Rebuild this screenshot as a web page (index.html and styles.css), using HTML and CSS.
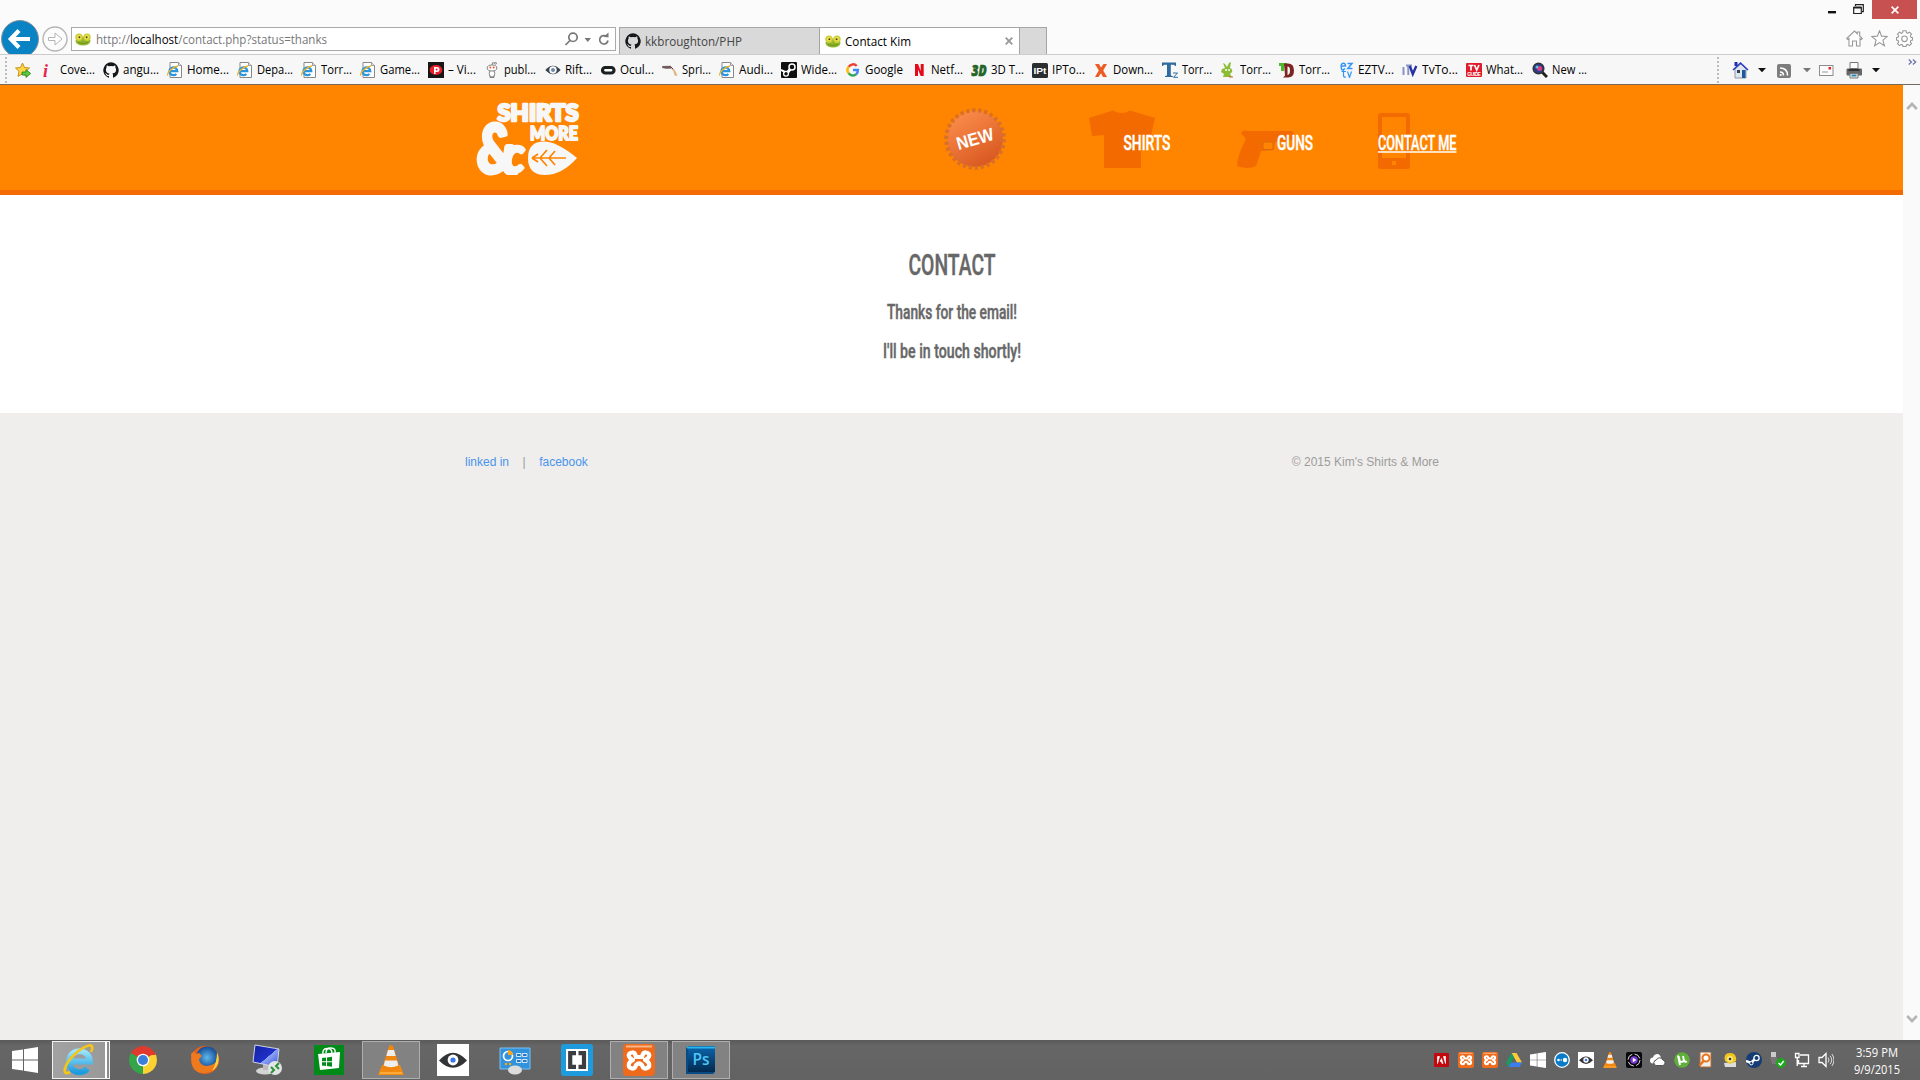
FILE: index.html
```html
<!DOCTYPE html>
<html lang="en">
<head>
<meta charset="utf-8">
<title>Contact Kim</title>
<link rel="stylesheet" href="styles.css">
</head>
<body>
<svg class="sprite" aria-hidden="true">
  <defs>
    <linearGradient id="g-badge" x1="0" y1="0" x2="0.6" y2="1"><stop offset="0" stop-color="#ff9350"/><stop offset="1" stop-color="#d95a22"/></linearGradient>
    <linearGradient id="g-blue" x1="0" y1="0" x2="0" y2="1"><stop offset="0" stop-color="#9be4fb"/><stop offset="1" stop-color="#1e9bdc"/></linearGradient>
    <linearGradient id="g-screen" x1="0" y1="0" x2="1" y2="1"><stop offset="0" stop-color="#1122a0"/><stop offset=".55" stop-color="#2030c8"/><stop offset=".56" stop-color="#8fa5f5"/><stop offset="1" stop-color="#3048d8"/></linearGradient>
    <linearGradient id="g-ps" x1="0" y1="0" x2="0" y2="1"><stop offset="0" stop-color="#0b62a8"/><stop offset="1" stop-color="#03294f"/></linearGradient>
    <radialGradient id="g-fox"><stop offset="0" stop-color="#5fb8ee"/><stop offset="1" stop-color="#134b94"/></radialGradient>
  </defs>
</svg>
<svg class="symbols" aria-hidden="true">
  <symbol id="frog" viewBox="0 0 16 16"><ellipse cx="8" cy="10" rx="7.500" ry="4.600" fill="#93b52c"/><circle cx="4" cy="6.300" r="3.700" fill="#c9cf3a"/><circle cx="12" cy="6.300" r="3.700" fill="#c9cf3a"/><circle cx="4.200" cy="6.200" r="2.200" fill="#f2e64e"/><circle cx="11.800" cy="6.200" r="2.200" fill="#f2e64e"/><circle cx="4.400" cy="6.200" r="1" fill="#5a3a10"/><circle cx="11.600" cy="6.200" r="1" fill="#5a3a10"/><path d="M3 11.500q5 2 10 0" stroke="#6d9020" fill="none"/></symbol>
  <symbol id="github" viewBox="0 0 16 16"><path fill="#15181b" d="M8 .2a8 8 0 0 0-2.5 15.500c.4.1.5-.2.5-.4v-1.400c-2.200.5-2.700-1-2.700-1-.4-.9-.9-1.200-.9-1.200-.7-.5.1-.5.1-.5.8.1 1.200.8 1.200.8.7 1.200 1.900.9 2.300.7.1-.5.3-.9.500-1.100-1.800-.2-3.600-.9-3.600-4 0-.9.300-1.600.8-2.100-.1-.2-.4-1 .1-2.100 0 0 .7-.2 2.200.8a7.500 7.500 0 0 1 4 0c1.500-1 2.200-.8 2.200-.8.4 1.100.2 1.900.1 2.100.5.6.8 1.300.8 2.100 0 3.100-1.900 3.700-3.700 3.900.3.300.6.8.6 1.500v2.300c0 .2.1.5.5.4A8 8 0 0 0 8 .2z"/></symbol>
  <symbol id="iepage" viewBox="0 0 16 16"><path d="M3 .5h8.500l3 3v12H3z" fill="#fff" stroke="#888"/><path d="M11.500.5v3h3" fill="#ddd" stroke="#888" stroke-width=".8"/><path d="M2.500 9.200h7.800a3.900 3.900 0 1 0-1 2.700" fill="none" stroke="#2a94dd" stroke-width="2.300"/><path d="M.8 13.500C-.5 11 6 4.500 11 4" stroke="#eab42a" stroke-width="1.300" fill="none"/></symbol>
  <symbol id="favstar" viewBox="0 0 16 16"><path d="M7.500 1l2 4.500 5 .5-3.700 3.300 1 5-4.300-2.600L3 14.300l1-5L.5 6l5-.5z" fill="#ffd64a" stroke="#c98f14"/><path d="M7 10h4V7.500l4.700 4-4.700 4V13H7z" fill="#5cc840" stroke="#22801a" stroke-width=".8"/></symbol>
  <symbol id="play" viewBox="0 0 16 16"><path d="M0 0h16v16H0z" fill="#171717"/><ellipse cx="8" cy="8" rx="6.300" ry="5" fill="#e8202c"/><path d="M6 5h3a2.500 2.500 0 0 1 0 5H7.500v2H6z" fill="#fff"/><circle cx="8.600" cy="7.500" r="1" fill="#e8202c"/></symbol>
  <symbol id="reddit" viewBox="0 0 16 16"><g fill="#fff" stroke="#777" stroke-width=".9"><path d="M6 13.500v2h4v-2"/><ellipse cx="8" cy="11.500" rx="2.800" ry="3.500"/><ellipse cx="8" cy="6" rx="4.800" ry="3"/><path d="M8 3l.6-2.300 2.500.5" fill="none"/><circle cx="11.600" cy="1.300" r=".9"/></g><circle cx="6.300" cy="5.600" r="1" fill="#f4552b"/><circle cx="9.700" cy="5.600" r="1" fill="#f4552b"/></symbol>
  <symbol id="rift" viewBox="0 0 16 16"><path d="M.3 8Q8-.5 15.700 8 8 16.500.3 8z" fill="#39414c"/><circle cx="8" cy="8" r="3.700" fill="#fff"/><circle cx="8" cy="8" r="2" fill="#6f88ad"/></symbol>
  <symbol id="oculus" viewBox="0 0 16 16"><rect x="2.500" y="5.500" width="11.500" height="5.500" rx="2.700" fill="#fff" stroke="#1b2020" stroke-width="3.200"/></symbol>
  <symbol id="gun" viewBox="0 0 16 16"><path d="M0 4l9-.2.5 3-5 .2L0 6z" fill="#8f7c7c"/><path d="M9 6.500l3 .5 2 3 1.500 4-3-.5-1-4z" fill="#dcb98a"/><path d="M1 5h8l2 2" stroke="#5b3947" fill="none"/></symbol>
  <symbol id="steamsq" viewBox="0 0 16 16"><rect width="16" height="16" rx="1" fill="#0f0f0f"/><circle cx="11" cy="5" r="3" fill="none" stroke="#fff" stroke-width="1.500"/><path d="M9 7.500L6 11" stroke="#fff" stroke-width="3"/><circle cx="5" cy="11.700" r="2.400" fill="#0f0f0f" stroke="#fff" stroke-width="1.300"/><path d="M0 8l4 2" stroke="#fff" stroke-width="2"/></symbol>
  <symbol id="google" viewBox="0 0 16 16"><g fill="none" stroke-width="2.500"><path d="M3.700 4.800A5 5 0 0 1 11.700 4" stroke="#ea4335"/><path d="M3.700 4.800a5 5 0 0 0 0 6.400" stroke="#fbbc05"/><path d="M3.700 11.200a5 5 0 0 0 7.600 1" stroke="#34a853"/><path d="M8 8h4.900q0 2.700-1.700 4.200" stroke="#4285f4"/></g></symbol>
  <symbol id="netflix" viewBox="0 0 16 16"><path d="M4 2h3l2.700 7V2h3v12h-3L7 7.500V14H4z" fill="#e50a19"/></symbol>
  <symbol id="orangex" viewBox="0 0 16 16"><path d="M2 2h4l2 3.500L10.500 2H14l-3.800 6.500L14 15h-4l-2-3.800L5.500 15H2l3.800-6.500z" fill="#ee5a24"/></symbol>
  <symbol id="tz" viewBox="0 0 16 16"><path d="M0 2V.5h14V4h-1q0-1.300-2-1.300H8.800V13q0 1 2 1v1H3v-1q2 0 2-1V2.700H3Q1 2.700 1 4H0z" fill="#2f6b9d"/><path d="M11 11h4.500l-4 4.300H16" fill="none" stroke="#2f6b9d"/></symbol>
  <symbol id="rabbit" viewBox="0 0 16 16"><path d="M5 6L3 1l2 1 2 3 2-4 2-1-1 6q3 1 2 4l-2 2 2 3H3l1-3-3-2 1-3z" fill="#8dbd36"/><circle cx="6" cy="8" r="1" fill="#fff"/><circle cx="9" cy="8" r="1" fill="#fff"/><path d="M9 15h4" stroke="#c63"/></symbol>
  <symbol id="td" viewBox="0 0 16 16"><path d="M0 1h8v3H5v5H2V4H0z" fill="#4db92c"/><path d="M5 1.500h4q6 0 6 7T9 15.500H4l2-2z" fill="#7c2523"/><path d="M8.500 4.500q2.500 0 2.500 4T8.500 13z" fill="#f7f7f7"/></symbol>
  <symbol id="ez" viewBox="0 0 16 16"><g fill="none" stroke="#3695f5" stroke-width="1.500"><path d="M3 4h4.500Q7.300 1 5.100 1.200T3.200 5.500 7 6.500M9.500 1.500h4.500L9.800 6.500h4.700"/><path d="M3.500 9.500H8M5.500 7.500v6q0 2 2.500 1.500M9.500 9.500l2 6 2-6" stroke-width="1.200"/></g></symbol>
  <symbol id="itv" viewBox="0 0 16 16"><path d="M1.500 5v8M4 3.500h6M6.300 3v10" stroke="#8a93c8" stroke-width="2"/><path d="M7.800 4l3 8 3.500-8" stroke="#2430a4" stroke-width="2.400" fill="none"/></symbol>
  <symbol id="magn" viewBox="0 0 16 16"><path d="M10 10l5 5" stroke="#222" stroke-width="3"/><circle cx="6.500" cy="6.500" r="5.300" fill="#273f8e" stroke="#333" stroke-width="1.500"/><circle cx="7.500" cy="6.500" r="2.500" fill="#e73880"/><circle cx="5" cy="5" r="1.500" fill="#5fc0d0"/></symbol>
  <symbol id="chevron" viewBox="0 0 12 9"><path d="M1.200 7L6 2l4.800 5" fill="none" stroke="#b5b5b5" stroke-width="2.600"/></symbol>
  <symbol id="winlogo" viewBox="0 0 26 26"><path d="M0 4l11-1.600v10H0zM12 2.200L26 0v12.400H12zM0 13.500h11v10L0 22zM12 13.500h14V26l-14-2.200z" fill="#fff"/></symbol>
  <symbol id="xampp" viewBox="0 0 32 32"><rect width="32" height="32" rx="4" fill="#ee6a1c"/><path d="M3 2.500h26" stroke="#f9b586" stroke-width="2"/><g fill="none" stroke="#fff" stroke-width="4.200" stroke-linejoin="round"><path d="M16 13h-3q-1-5-4-4.500-4 .5-3 4 1 2.500 4 3.500-3 1-4 3.500-1 4 3 5 3 .5 4-3.500 3-3 6 0 1 4 4 3.500 4-1 3-5-1-2.500-4-3.500 3-1 4-3.500 1-3.500-3-4-3-.5-4 4.500z"/></g></symbol>
  <symbol id="vlc" viewBox="0 0 26 30"><path d="M4 20h18l4 10H0z" fill="#f28a12"/><path d="M13 0l2 1 7 23q-9 4-18 0L11 1z" fill="#f0850f"/><path d="M10 5h6l1.700 6H8.300zM7 15.500h12l1.300 5Q13 24 5.700 20.500z" fill="#eee"/><path d="M2 28h22" stroke="#ffb44a" stroke-width="1.500"/></symbol>
  <symbol id="eye" viewBox="0 0 32 32"><path d="M0 0h32v32H0z" fill="#fff"/><path d="M2 16.500Q16 1 30 16.500 16 31 2 16.500z" fill="#333436"/><circle cx="16" cy="16" r="5.400" fill="#fff"/><circle cx="16" cy="16" r="2.600" fill="#3b78e7"/></symbol>
</svg>

<header class="browser">
  <div class="frame">
    <svg class="back" viewBox="0 0 40 35"><circle cx="20" cy="20" r="18.500" fill="#0a83c4" stroke="#87929a"/><path d="M11 20h19M19 11.500L10.800 20l8.200 8.500" fill="none" stroke="#fff" stroke-width="4.200"/></svg>
    <svg class="forward" viewBox="0 0 26 26"><circle cx="13" cy="13" r="12" fill="#fcfcfc" stroke="#b5b5b5" stroke-width="1.400"/><path d="M6.500 11.500h6.500V7l7 6-7 6v-4.500H6.500z" fill="#fff" stroke="#b5b5b5"/></svg>
    <div class="address">
      <svg class="i16"><use href="#frog"/></svg>
      <svg class="url" width="232" height="20"><text y="15" textLength="231" lengthAdjust="spacingAndGlyphs"><tspan fill="#777">http://</tspan><tspan fill="#000">localhost</tspan><tspan fill="#777">/contact.php?status=thanks</tspan></text></svg>
      <svg class="addr-tools" width="48" height="18" viewBox="0 0 48 18"><g fill="none" stroke="#777" stroke-width="1.700"><circle cx="10" cy="7.300" r="4.200"/><path d="M7 10.500L2.500 15"/><path d="M43.500 6.500A4.200 4.200 0 1 0 45 10.500"/></g><path d="M21.500 8h6.500l-3.200 4z" fill="#777"/><path d="M40.500 6.800l5 .8V2.500z" fill="#777"/></svg>
    </div>
    <nav class="tabs">
      <div class="tab"><svg class="i16"><use href="#github"/></svg><svg width="100" height="20"><text y="15" textLength="97" lengthAdjust="spacingAndGlyphs" fill="#444">kkbroughton/PHP</text></svg></div>
      <div class="tab active"><svg class="i16"><use href="#frog"/></svg><svg width="70" height="20"><text y="15" textLength="66" lengthAdjust="spacingAndGlyphs">Contact Kim</text></svg><svg class="close-tab" width="8" height="8" viewBox="0 0 8 8"><path d="M.7.7l6.600 6.600M7.300.7L.7 7.300" stroke="#999" stroke-width="1.900"/></svg></div>
      <div class="tab new"></div>
    </nav>
    <div class="frame-right">
      <div class="winbtns">
        <svg width="8" height="19"><path d="M0 11h8v2.400H0z" fill="#111"/></svg>
        <svg width="11" height="19"><path d="M2.500 6V4.700h7.800v7H9M.7 7.500h7.600v6H.7z" fill="none" stroke="#222" stroke-width="1.200"/><path d="M.5 7.500h8" stroke="#222" stroke-width="2"/></svg>
        <div class="close"><svg width="8" height="8" viewBox="0 0 8 8"><path d="M.6.600l6.800 6.800M7.400.6L.6 7.400" stroke="#fff" stroke-width="1.600"/></svg></div>
      </div>
      <div class="ietools">
        <svg width="17" height="17" viewBox="0 0 17 17"><path d="M.7 8.500L8.500 1l2.700 2.600V2h2.500v4l2.600 2.500-1 1-1.300-1V16h-3.500v-5h-4v5H3V8.500l-1.300 1z"/></svg>
        <svg width="17" height="17" viewBox="0 0 17 17"><path d="M8.500.8l2.100 5.300 5.700.3-4.400 3.700 1.500 5.600-4.900-3.100-4.900 3.100 1.500-5.600L.7 6.400l5.700-.3z"/></svg>
        <svg width="17" height="17" viewBox="0 0 17 17"><path d="M7 .7h3l.4 2 1.400.6 1.700-1.200 2 2-1.200 1.700.6 1.400 1.600.4v2.400l-1.600.4-.6 1.500 1.200 1.700-2 2-1.700-1.200-1.400.6-.4 1.600H7l-.4-1.600-1.400-.6-1.700 1.200-2-2 1.200-1.700-.6-1.500-1.600-.4V7.600l1.600-.4.6-1.400-1.200-1.700 2-2 1.700 1.200 1.400-.6z"/><circle cx="8.500" cy="8.800" r="2.800"/></svg>
      </div>
    </div>
  </div>
  <div class="favbar">
    <div class="grip"></div>
    <ul class="favs">
      <li><svg class="i16"><use href="#favstar"/></svg></li>
      <li><svg class="i16"><text x="3" y="15" font-family="Liberation Serif,serif" font-style="italic" font-weight="bold" font-size="18" fill="#e4284c">i</text></svg><svg class="lb"><text y="14" textLength="35" lengthAdjust="spacingAndGlyphs">Cove...</text></svg></li>
      <li><svg class="i16"><use href="#github"/></svg><svg class="lb"><text y="14" textLength="36" lengthAdjust="spacingAndGlyphs">angu...</text></svg></li>
      <li><svg class="i16"><use href="#iepage"/></svg><svg class="lb"><text y="14" textLength="42" lengthAdjust="spacingAndGlyphs">Home...</text></svg></li>
      <li><svg class="i16"><use href="#iepage"/></svg><svg class="lb"><text y="14" textLength="36" lengthAdjust="spacingAndGlyphs">Depa...</text></svg></li>
      <li><svg class="i16"><use href="#iepage"/></svg><svg class="lb"><text y="14" textLength="31" lengthAdjust="spacingAndGlyphs">Torr...</text></svg></li>
      <li><svg class="i16"><use href="#iepage"/></svg><svg class="lb"><text y="14" textLength="40" lengthAdjust="spacingAndGlyphs">Game...</text></svg></li>
      <li><svg class="i16"><use href="#play"/></svg><svg class="lb"><text y="14" textLength="28" lengthAdjust="spacingAndGlyphs">– Vi...</text></svg></li>
      <li><svg class="i16"><use href="#reddit"/></svg><svg class="lb"><text y="14" textLength="32" lengthAdjust="spacingAndGlyphs">publ...</text></svg></li>
      <li><svg class="i16"><use href="#rift"/></svg><svg class="lb"><text y="14" textLength="27" lengthAdjust="spacingAndGlyphs">Rift...</text></svg></li>
      <li><svg class="i16"><use href="#oculus"/></svg><svg class="lb"><text y="14" textLength="34" lengthAdjust="spacingAndGlyphs">Ocul...</text></svg></li>
      <li><svg class="i16"><use href="#gun"/></svg><svg class="lb"><text y="14" textLength="29" lengthAdjust="spacingAndGlyphs">Spri...</text></svg></li>
      <li><svg class="i16"><use href="#iepage"/></svg><svg class="lb"><text y="14" textLength="34" lengthAdjust="spacingAndGlyphs">Audi...</text></svg></li>
      <li><svg class="i16"><use href="#steamsq"/></svg><svg class="lb"><text y="14" textLength="36" lengthAdjust="spacingAndGlyphs">Wide...</text></svg></li>
      <li><svg class="i16"><use href="#google"/></svg><svg class="lb"><text y="14" textLength="38" lengthAdjust="spacingAndGlyphs">Google</text></svg></li>
      <li><svg class="i16"><use href="#netflix"/></svg><svg class="lb"><text y="14" textLength="32" lengthAdjust="spacingAndGlyphs">Netf...</text></svg></li>
      <li><svg class="i16"><text x=".5" y="13.500" font-weight="800" font-style="italic" font-size="15" textLength="15" lengthAdjust="spacingAndGlyphs" fill="#236a25" stroke="#1b561d" stroke-width=".6">3D</text></svg><svg class="lb"><text y="14" textLength="33" lengthAdjust="spacingAndGlyphs">3D T...</text></svg></li>
      <li><svg class="i16"><rect y="1" width="16" height="15" rx="1.500" fill="#2a2e31"/><text x="1.500" y="12" font-family="Liberation Sans,sans-serif" font-weight="bold" font-size="9.500" textLength="13" lengthAdjust="spacingAndGlyphs" fill="#fff">IPt</text></svg><svg class="lb"><text y="14" textLength="33" lengthAdjust="spacingAndGlyphs">IPTo...</text></svg></li>
      <li><svg class="i16"><use href="#orangex"/></svg><svg class="lb"><text y="14" textLength="40" lengthAdjust="spacingAndGlyphs">Down...</text></svg></li>
      <li><svg class="i16"><use href="#tz"/></svg><svg class="lb"><text y="14" textLength="30" lengthAdjust="spacingAndGlyphs">Torr...</text></svg></li>
      <li><svg class="i16"><use href="#rabbit"/></svg><svg class="lb"><text y="14" textLength="31" lengthAdjust="spacingAndGlyphs">Torr...</text></svg></li>
      <li><svg class="i16"><use href="#td"/></svg><svg class="lb"><text y="14" textLength="31" lengthAdjust="spacingAndGlyphs">Torr...</text></svg></li>
      <li><svg class="i16"><use href="#ez"/></svg><svg class="lb"><text y="14" textLength="36" lengthAdjust="spacingAndGlyphs">EZTV...</text></svg></li>
      <li><svg class="i16"><use href="#itv"/></svg><svg class="lb"><text y="14" textLength="36" lengthAdjust="spacingAndGlyphs">TvTo...</text></svg></li>
      <li><svg class="i16"><rect y="1" width="16" height="14" rx="1" fill="#e01b2b"/><path d="M2.500 3.500h5M5 3.500v5M8.500 3l2.200 5L13 3" stroke="#fff" stroke-width="1.700" fill="none"/><text x="1.200" y="13.600" font-family="Liberation Sans,sans-serif" font-weight="bold" font-size="5" textLength="13.600" fill="#fff">GUIDE</text></svg><svg class="lb"><text y="14" textLength="37" lengthAdjust="spacingAndGlyphs">What...</text></svg></li>
      <li><svg class="i16"><use href="#magn"/></svg><svg class="lb"><text y="14" textLength="35" lengthAdjust="spacingAndGlyphs">New ...</text></svg></li>
    </ul>
    <div class="cmdbar">
      <div class="grip"></div>
      <svg width="164" height="18" viewBox="0 0 164 18"><path d="M3 8l6-5 5 5v9H3z" fill="#dfe6ee" stroke="#7a8797" stroke-width=".8"/><path d="M1 9l7.500-7L16 9" fill="none" stroke="#2a3cc0" stroke-width="1.600"/><path d="M2.500 1h3v4h-3z" fill="#1f2fb0"/><path d="M5 9h3v3H5z" fill="#345"/><path d="M10 9h3.500v8H10z" fill="#1d5a9c"/><g fill="#111"><path d="M26 7h8l-4 4.300zM140 7h8l-4 4.300z"/></g><path d="M71 7h8l-4 4.300z" fill="#777"/><rect x="45" y="3" width="14" height="14" rx="2" fill="#7d7d7d"/><g fill="none" stroke="#fff" stroke-width="1.600"><path d="M48 11q3.500 0 3.500 3.500M48 7q7.500 0 7.500 7.500"/></g><circle cx="48.700" cy="14" r="1.100" fill="#fff"/><rect x="87.500" y="4.500" width="13.500" height="10" fill="#fcfcfc" stroke="#8d8d8d"/><path d="M96.500 6h2.500v2.500h-2.500z" fill="#e22"/><path d="M90 11h6" stroke="#999"/><path d="M118 1.500h8v6h-8z" fill="#fff" stroke="#777"/><rect x="114.500" y="7.500" width="15.500" height="7" rx="1" fill="#666"/><path d="M116.500 9h11" stroke="#222" stroke-width="1.500"/><path d="M118 12.500h8V17h-8z" fill="#eee" stroke="#777"/><path d="M119.500 14.500h5" stroke="#288ab0" stroke-width="2"/></svg>
      <svg class="more" width="9" height="6" viewBox="0 0 9 6"><path d="M.7.500L3.500 3 .7 5.500M4.900.5L7.700 3 4.900 5.500" fill="none" stroke="#6a70aa" stroke-width="1.200"/></svg>
    </div>
  </div>
</header>

<div class="viewport">
  <div class="page">
    <div class="banner">
      <svg class="logo" width="110" height="76" viewBox="0 0 110 76" fill="#f7f7f7">
        <g stroke="#f7f7f7" class="chunky"><text x="24.500" y="19.200" font-size="23.500" textLength="81" lengthAdjust="spacingAndGlyphs" stroke-width="2.600">SHIRTS</text><text x="57" y="37.500" font-size="18" textLength="48" lengthAdjust="spacingAndGlyphs" stroke-width="1.900">MORE</text><text x="3.500" y="71" font-size="66" textLength="40" lengthAdjust="spacingAndGlyphs" stroke-width="4">&amp;</text><text x="30" y="71" font-size="51" font-style="italic" textLength="22" lengthAdjust="spacingAndGlyphs" stroke-width="2.500">c</text></g>
        <path d="M55 56Q55 39.500 71 39.500 84 39.500 104 56 89 73 72 73 55 73 55 56z"/><path d="M59 56h34M59 56l6-4M67 56l7-8M67 56l7 8M76 56l6-7M76 56l6 7M59 56l6 4" fill="none" stroke="#ff8400" stroke-width="1.700"/>
      </svg>
      <nav class="menu">
        <svg width="64" height="64" viewBox="-32 -32 64 64"><circle r="28" fill="url(#g-badge)"/><circle r="28.800" fill="none" stroke="#d9702a" stroke-width="4" stroke-dasharray="3.300 2.730"/><text transform="rotate(-16)" y="6" text-anchor="middle" font-family="Liberation Sans,sans-serif" font-weight="bold" font-size="18" fill="#fff" textLength="38" lengthAdjust="spacingAndGlyphs">NEW</text></svg>
        <svg width="84" height="64" viewBox="0 0 84 64"><path d="M0 11L24 3.500q9 5 17 0L66 11l-4 18-10-1v33H15V28l-12 1z" fill="#f36b00"/><text x="34.500" y="43" class="cond" font-size="19.700" textLength="47" lengthAdjust="spacingAndGlyphs">SHIRTS</text></svg>
        <svg width="80" height="64" viewBox="0 0 80 64"><path d="M7 24l2-1 1 1h46l2 2v7l-19 2-1 8-13 1-5 15q-8 4-19 0 0-10 9-27l-5-6z" fill="#f36b00"/><path d="M27 35h10v7.500H27z" fill="#ff8400" stroke="#d96a0a"/><text x="41" y="43" class="cond" font-size="19.700" textLength="36" lengthAdjust="spacingAndGlyphs">GUNS</text></svg>
        <svg width="82" height="64" viewBox="0 0 82 64"><path fill-rule="evenodd" d="M4 6h26q3 0 3 3v50q0 3-3 3H4q-3 0-3-3V9q0-3 3-3zM5 10v41h24V10zM15 54v4h4v-4z" fill="#f36b00"/><text x="1" y="43" class="cond" font-size="19.700" textLength="78.500" lengthAdjust="spacingAndGlyphs">CONTACT ME</text><path d="M1 45h78.500" stroke="#fff" stroke-width="1.500"/></svg>
      </nav>
    </div>
    <main class="content">
      <svg width="90" height="30"><text x="1.500" y="24" class="cond dark" font-size="29.500" textLength="87" lengthAdjust="spacingAndGlyphs">CONTACT</text></svg>
      <svg width="134" height="24"><text x="2" y="19" class="cond dark" font-size="19.700" textLength="130" lengthAdjust="spacingAndGlyphs">Thanks for the email!</text></svg>
      <svg width="142" height="24"><text x="2" y="19" class="cond dark" font-size="19.700" textLength="138" lengthAdjust="spacingAndGlyphs">I'll be in touch shortly!</text></svg>
    </main>
    <footer class="foot">
      <div class="links"><a>linked in</a><span>|</span><a>facebook</a></div>
      <div>© 2015 Kim's Shirts &amp; More</div>
    </footer>
  </div>
  <div class="scroll">
    <svg width="12" height="9"><use href="#chevron"/></svg>
    <svg width="12" height="9" class="down"><use href="#chevron"/></svg>
  </div>
</div>

<footer class="taskbar">
  <div class="apps">
    <div class="app"><svg width="26" height="26"><use href="#winlogo"/></svg></div>
    <div class="app tile ie"><svg width="32" height="32" viewBox="0 0 32 32"><path d="M6 17.500h21a10.500 10.500 0 1 0-2.500 7" fill="none" stroke="url(#g-blue)" stroke-width="6"/><path d="M7 28C-2 33 1 20 12 10S33-2 28 8" fill="none" stroke="#f5c518" stroke-width="2.600"/></svg></div>
    <div class="app chrome"><svg width="28" height="28" viewBox="-14 -14 28 28"><path d="M0 0L-12.100-7A14 14 0 0 1 12.100-7z" fill="#e03a2e"/><path d="M0 0L12.100-7A14 14 0 0 1 0 14z" fill="#fcd232"/><path d="M0 0V14A14 14 0 0 1-12.100-7z" fill="#35a549"/><path d="M0-6h12.600" stroke="#e03a2e" stroke-width="2"/><circle r="6.300" fill="#fff"/><circle r="5" fill="#3c7edb"/></svg></div>
    <div class="app"><svg width="30" height="30" viewBox="0 0 30 30"><circle cx="15" cy="15" r="14" fill="#e8601a"/><circle cx="17" cy="12.500" r="11" fill="url(#g-fox)"/><path d="M27 6q5 15-7 21Q6 31 2 20L1 9l3-3 1 3 4-1 3 3-3 3q1 7 8 7 10-1 11-9z" fill="#ee7a1d"/><path d="M27 7q5 12-5 19 5-8 5-19z" fill="#ffd23c"/></svg></div>
    <div class="app"><svg width="32" height="32" viewBox="0 0 32 32"><ellipse cx="14" cy="27" rx="9" ry="3.500" fill="#d4d4d4"/><path d="M12 20h7v6h-7z" fill="#bbb"/><path d="M4 1l24 4-2 18-24-5z" fill="url(#g-screen)" stroke="#cfd4e4"/><circle cx="24" cy="24" r="7" fill="#e4e4e4"/><path d="M20 23l3 3-3 3M28 19l-3 3 3 3" stroke="#249436" stroke-width="2" fill="none"/></svg></div>
    <div class="app store"><svg width="30" height="30" viewBox="0 0 30 30"><path d="M0 0h30v30H0z" fill="#008a17"/><path d="M4 9l22-2-1 16-19 2z" fill="#fff"/><path d="M9 9q-1-5 4-5.500t5 5M12 8q0-5 5-5t4 5" stroke="#fff" stroke-width="1.400" fill="none"/><path d="M8 13l4-.5v3.800H8zM13 12.400l5-.6v4.500h-5zM8 17.200h4V21l-4-.5zM13 17.200h5v4.500l-5-.6z" fill="#008a17"/></svg></div>
    <div class="app tile"><svg width="26" height="30"><use href="#vlc"/></svg></div>
    <div class="app"><svg width="32" height="32"><use href="#eye"/></svg></div>
    <div class="app"><svg width="32" height="30" viewBox="0 0 32 30"><path d="M1 3h30v21H1z" fill="#3292dc" stroke="#79c1f2"/><circle cx="9" cy="11" r="4.500" fill="none" stroke="#fff" stroke-width="1.700"/><path d="M9 10V5a5 5 0 0 1 5 5z" fill="#f7a51e"/><path d="M17.500 8.500h4.500v3h-4.500zM23.500 8.500h4.500v3h-4.500zM17.500 14.500h4.500v3h-4.500zM23.500 14.500h4.500v3h-4.500z" fill="#2476bd" stroke="#e4f3ff" stroke-width=".9"/><circle cx="7" cy="19" r="1.300" fill="#f7a51e"/><circle cx="11" cy="19" r="1.300" fill="#f7a51e"/><ellipse cx="16" cy="25" rx="7" ry="4.500" fill="#dcdcdc"/></svg></div>
    <div class="app"><svg width="32" height="32" viewBox="0 0 32 32"><rect width="32" height="32" rx="3" fill="#1d9bdc"/><path d="M5 5h22v22H5z" fill="#fff"/><path d="M15 9.200H9.200v13.600H15M17.500 9.200h5.500v13.600h-5.500" fill="none" stroke="#3b3d40" stroke-width="4.200"/></svg></div>
    <div class="app tile"><svg width="32" height="32"><use href="#xampp"/></svg></div>
    <div class="app tile"><svg width="30" height="28" viewBox="0 0 30 28"><path d="M0 2l3-2h26v26l-2 2H0z" fill="#0a4a84"/><path d="M2 2h27v24H2z" fill="url(#g-ps)"/><path d="M1 1.500h28" stroke="#28b6f0" stroke-width="2"/><text x="6.500" y="19" font-weight="600" font-size="16" textLength="17" lengthAdjust="spacingAndGlyphs" fill="#4cc7f7">Ps</text></svg></div>
  </div>
  <div class="tray">
    <svg viewBox="0 0 16 16"><rect y="1" width="15" height="14" rx="1" fill="#c4090d"/><path d="M3.500 11.500V4.500h2zM9.500 4.500h2v7zM6.200 9.500L7.500 6.500 9 11.500H8L7.500 9.500z" stroke="#fff" stroke-width=".7" fill="#fff"/></svg>
    <svg><use href="#xampp"/></svg>
    <svg><use href="#xampp"/></svg>
    <svg viewBox="0 0 16 16"><path d="M5.500 1h5L16 10.500h-5z" fill="#fccb3c"/><path d="M5.500 1L0 10.500 2.500 15 8 5.500z" fill="#1a9c5b"/><path d="M5 10.500h11L13.500 15h-11z" fill="#3c7df0"/></svg>
    <svg><use href="#winlogo"/></svg>
    <svg viewBox="0 0 16 16"><circle cx="8" cy="8" r="7.300" fill="#0a7bc8" stroke="#fff" stroke-width="1.300"/><circle cx="4.500" cy="8" r="1.300" fill="#fff"/><circle cx="7.200" cy="8" r=".8" fill="#fff"/><circle cx="11" cy="8" r="2.200" fill="#fff"/></svg>
    <svg><use href="#eye"/></svg>
    <svg><use href="#vlc"/></svg>
    <svg viewBox="0 0 16 16"><rect width="16" height="16" rx="2" fill="#08080c"/><circle cx="8" cy="8" r="6" fill="none" stroke="#ddd" stroke-dasharray="7 2.400"/><circle cx="8" cy="8" r="3.800" fill="#7a35d8"/><path d="M6.800 5.800l3.700 2.200-3.700 2.200z" fill="#fff"/></svg>
    <svg viewBox="0 0 16 16"><path d="M3 11.500a3 3 0 0 1 0-6 4 4 0 0 1 7-2l1 2z" fill="#fff"/><path d="M6 13.500a2.800 2.800 0 0 1 .3-5.500 3.500 3.500 0 0 1 6.500 0 2.800 2.800 0 0 1 0 5.500z" fill="#fff" stroke="#555"/></svg>
    <svg viewBox="0 0 16 16"><circle cx="8" cy="8" r="7.800" fill="#5faf3a"/><path d="M4 3.500L6 13M4.700 4.500l1 4.500q2 2 4.300-.5L9 4M10 8.500q1 2 3 1" stroke="#fff" stroke-width="1.900" fill="none"/></svg>
    <svg viewBox="0 0 16 16"><path d="M2 0h11v15H2z" fill="#f0efea" stroke="#b56a30"/><circle cx="8" cy="6" r="3.500" fill="#fff" stroke="#e8741c" stroke-width="2"/><path d="M5.500 9L1.500 13.500" stroke="#e8741c" stroke-width="2.500"/></svg>
    <svg viewBox="0 0 16 16"><path d="M2 11l12-1v5H3z" fill="#ddd"/><path d="M3 9q-2-8 5-8t6 8l-6 3z" fill="#f3c81e"/><circle cx="8" cy="7" r="3" fill="#fbe683"/><circle cx="8" cy="7" r="1.300" fill="#333"/></svg>
    <svg viewBox="0 0 16 16"><circle cx="8" cy="8" r="8" fill="#143d73"/><path d="M0 9l5 2 4-4" stroke="#fff" stroke-width="2.500" fill="none"/><circle cx="10.500" cy="6" r="2.600" fill="#143d73" stroke="#fff" stroke-width="1.300"/><circle cx="5.300" cy="11.200" r="1.700" fill="#143d73" stroke="#fff"/></svg>
    <svg viewBox="0 0 16 16"><path d="M1 0h5v5H1z" fill="#ccc"/><path d="M0 5h7v7H2z" fill="#777"/><circle cx="11" cy="11" r="5" fill="#1da81c"/><path d="M8.500 11l2 2 3.200-4" fill="none" stroke="#fff" stroke-width="1.500"/></svg>
    <svg viewBox="0 0 16 16"><g fill="none" stroke="#fff" stroke-width="1.300"><path d="M6 3h8.500v8.500H4.500V8M7 14.500h6M10 11.500v3M1.500 1.500H5v4H1.500zM3.200 5.500V14"/></g></svg>
    <svg viewBox="0 0 16 16"><path d="M1 5.500h3l4-4v13l-4-4H1z" fill="none" stroke="#fff" stroke-width="1.300"/><path d="M10 5.500q2 2.500 0 5M12 3.800q3.500 4.200 0 8.400M14 2q4 6 0 12" fill="none" stroke="#ddd" stroke-width="1"/></svg>
  </div>
  <div class="clock">
    <svg width="50" height="17"><text x="4" y="14" textLength="42" lengthAdjust="spacingAndGlyphs">3:59 PM</text></svg>
    <svg width="50" height="17"><text x="2" y="14" textLength="46" lengthAdjust="spacingAndGlyphs">9/9/2015</text></svg>
  </div>
</footer>
</body>
</html>
```
FILE: styles.css
```css
* { box-sizing: border-box; }
body {
  margin: 0;
  width: 1920px;
  height: 1080px;
  overflow: hidden;
  display: flex;
  flex-direction: column;
  font: 12px "Open Sans", "Noto Sans", sans-serif;
}
svg { display: block; flex: none; }
.sprite { position: absolute; width: 0; height: 0; }
.symbols { display: none; }
.i16 { width: 16px; height: 16px; }

/* Browser frame */
.browser { flex: none; height: 85px; background: #fbfbfb; border-bottom: 1px solid #75695e; }
.frame { height: 55px; display: flex; border-bottom: 1px solid #ccc; }
.back { width: 40px; height: 35px; margin-top: 19px; overflow: hidden; }
.forward { width: 26px; height: 26px; margin: 26px 3px 0 2px; }
.address {
  width: 545px;
  height: 24px;
  margin-top: 27px;
  display: flex;
  align-items: center;
  padding: 0 4px 0 3px;
  background: #fff;
  border: 1px solid #aaa;
}
.url { margin-left: 5px; }
.addr-tools { margin-left: auto; }
.tabs { display: flex; margin: 27px 0 0 3px; height: 27px; border: solid #a5a5a5; border-width: 1px 1px 0; }
.tab { display: flex; align-items: center; width: 200px; background: #d9d9d9; padding-left: 5px; gap: 4px; border-right: 1px solid #a5a5a5; }
.tab.active { background: #fff; }
.tab.new { width: 26px; border: 0; }
.close-tab { margin-left: auto; margin-right: 6px; }
.frame-right { margin-left: auto; display: flex; flex-direction: column; align-items: flex-end; }
.winbtns { display: flex; padding-right: 3px; }
.winbtns svg + svg { margin-left: 17px; }
.close { margin-left: 8px; width: 45px; height: 19px; background: #c75050; display: flex; align-items: center; justify-content: center; }
.ietools { display: flex; gap: 8px; margin: 11px 7px 0 0; fill: #fff; stroke: #999; stroke-width: 1.1; }

/* Favorites and command bars */
.favbar { height: 29px; background: #f7f7f7; display: flex; align-items: center; padding-left: 5px; }
.grip { width: 0; height: 26px; border-left: 2px dotted #bbb; }
.favs {
  list-style: none;
  margin: 0 0 0 8px;
  padding: 0;
  display: grid;
  grid-template-columns: 25px 63px 64px 70px 64px 59px 68px 56px 61px 55px 62px 57px 62px 64px 66px 60px 61px 61px 69px 58px 59px 59px 64px 64px 66px 58px;
}
.favs li { display: flex; align-items: center; gap: 4px; }
.lb { width: 44px; height: 20px; }
.cmdbar { margin-left: auto; display: flex; align-items: center; }
.cmdbar .grip { margin-right: 13px; }
.more { margin: -16px 3px 0 12px; }

/* Web page */
.viewport { flex: 1; display: flex; min-height: 0; }
.page { flex: 1; background: #efeeec; }
.banner {
  height: 110px;
  background: #ff8400;
  border-bottom: 5px solid #f36b00;
  display: flex;
  justify-content: space-between;
  padding: 17px 444px 0 473px;
}
.chunky { font-family: "Lato", sans-serif; font-weight: 900; stroke-linejoin: round; }
.menu { display: grid; grid-template-columns: 146px 147px 141px 82px; padding-top: 5px; }
.cond { font-family: "Roboto", sans-serif; font-weight: 500; fill: #fff; stroke: #fff; stroke-width: .45px; }
.cond.dark { fill: #676767; stroke: #676767; }
.content { height: 218px; background: #fff; display: flex; flex-direction: column; align-items: center; padding-top: 56px; gap: 15px; }
.content svg:nth-child(2) { margin-top: 4px; }
.foot {
  display: flex;
  justify-content: space-between;
  padding: 42px 464px 0 465px;
  font: 12px/14px "Liberation Sans", Arial, sans-serif;
  color: #9c9c9c;
}
.links { display: flex; gap: 13.5px; }
.links a { color: #4a94ec; }
.scroll { width: 17px; background: #fafafa; display: flex; flex-direction: column; justify-content: space-between; align-items: center; padding: 17px 0; }
.down { transform: rotate(180deg); }

/* Taskbar */
.taskbar { height: 40px; flex: none; background: linear-gradient(#5a5a5a, #666 6px, #626262); display: flex; align-items: center; }
.apps { display: grid; grid-template-columns: 52px 58px 64px 62px 62px 64px 58px 66px 58px 66px 62px 58px; align-items: center; }
.app { height: 38px; display: flex; align-items: center; justify-content: center; }
.app:first-child { padding-right: 2px; }
.store { padding-right: 2px; }
.tile { background: #828282; border: 1px solid #aeaeae; width: 58px; }
.tile.ie { background: linear-gradient(90deg, #a2a2a2, #999 52px, #fff 52px 54px, #8c8c8c 54px); border: 1px solid #f2f2f2; padding-right: 4px; }
.chrome { padding-left: 2px; }
.tray { margin-left: auto; display: flex; gap: 8px; }
.tray svg { width: 16px; height: 16px; }
.clock { margin: 0 18px 0 18px; fill: #fff; }
```
